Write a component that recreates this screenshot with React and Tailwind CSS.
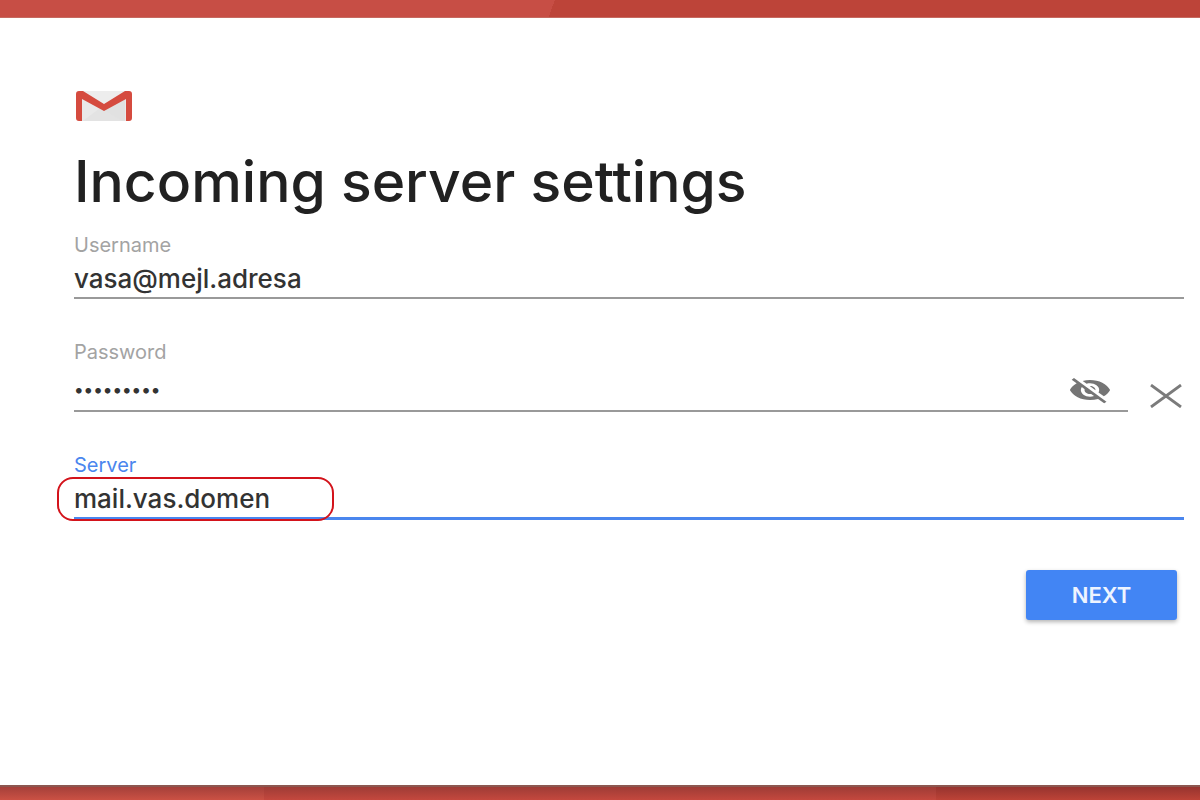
function GmailLogo() {
  return (
    <svg className="ml-0.5 h-8 w-14" viewBox="0 0 56 32" preserveAspectRatio="none" role="img" aria-label="Gmail">
      <rect x="1" y="1" width="54" height="30" rx="3" fill="#e9e9e9" />
      <path d="M4 3 L28 18 L52 3 V1 H4Z" fill="#ededed" />
      <path d="M7 31 L28 15 L49 31Z" fill="#e3e3e3" />
      <path d="M28 20 L46 31 H49 V7Z" fill="#e1e1e1" />
      <path d="M3 1 H7 L28 14 L49 1 H53 Q56 1 56 4 V28 Q56 31 53 31 H50 V9 L28 21 L6 9 V31 H3 Q0 31 0 28 V4 Q0 1 3 1Z" fill="#d54b3f" />
    </svg>
  );
}

function HiddenEyeIcon() {
  return (
    <svg className="h-8 w-11" viewBox="0 0 24 24" preserveAspectRatio="none" fill="#757575" aria-hidden="true">
      <path d="M12 7c2.76 0 5 2.24 5 5 0 .65-.13 1.26-.36 1.83l2.92 2.92c1.51-1.26 2.7-2.89 3.43-4.75-1.73-4.39-6-7.5-11-7.5-1.4 0-2.74.25-3.98.7l2.16 2.16C10.74 7.13 11.35 7 12 7zM2 4.27l2.28 2.28.46.46C3.08 8.3 1.78 10.02 1 12c1.73 4.39 6 7.5 11 7.5 1.55 0 3.03-.3 4.38-.84l.42.42L19.73 22 21 20.73 3.27 3 2 4.27zM7.53 9.8l1.55 1.55c-.05.21-.08.43-.08.65 0 1.66 1.34 3 3 3 .22 0 .44-.03.65-.08l1.55 1.55c-.67.33-1.41.53-2.2.53-2.76 0-5-2.24-5-5 0-.79.2-1.53.53-2.2zm4.31-.78l3.15 3.15.02-.16c0-1.66-1.34-3-3-3l-.17.01z" />
    </svg>
  );
}

function ClearIcon() {
  return (
    <svg className="h-6 w-8" viewBox="0 0 32 24" fill="none" stroke="#7b7b7b" strokeWidth="2.8" aria-hidden="true">
      <path d="M1 1 L31 23 M31 1 L1 23" />
    </svg>
  );
}

const inputClass = "w-full min-w-0 bg-transparent leading-8 font-medium text-[#333333] outline-none";

export default function App() {
  return (
    <div className="flex min-h-screen flex-col bg-white font-['Inter','Liberation_Sans',sans-serif]">
      <header className="h-[18px] border-b border-[#c66a60] bg-[linear-gradient(110deg,#c74e45_46%,#bd4439_46%)]" />
      <main className="flex-1 pt-[72px] pr-4 pb-10 pl-[74px]">
        <GmailLogo />
        <h1 className="mt-8 text-[57px] leading-14 font-medium text-[#212121]">Incoming server settings</h1>
        <form onSubmit={(event) => event.preventDefault()}>
          <div className="mt-[25px] border-b-2 border-[#999999]">
            <label htmlFor="username" className="block text-xl leading-5 text-[#a3a3a3]">Username</label>
            <input id="username" type="text" defaultValue="vasa@mejl.adresa" className={`${inputClass} mt-2 mb-0.5 text-[26px]`} />
          </div>
          <div className="mt-[43px] flex items-end gap-[22px]">
            <div className="min-w-0 flex-1 border-b-2 border-[#999999]">
              <label htmlFor="password" className="block text-xl leading-5 text-[#a3a3a3]">Password</label>
              <div className="mt-3 mb-1 flex items-center pr-4">
                <input id="password" type="password" defaultValue="password1" className={`${inputClass} text-[18px]`} />
                <button type="button" aria-label="Show password"><HiddenEyeIcon /></button>
              </div>
            </div>
            <button type="button" aria-label="Clear password" className="mr-0.5 mb-1"><ClearIcon /></button>
          </div>
          <div className="relative mt-[43px] border-b-3 border-[#4a86ee]">
            <label htmlFor="server" className="block text-xl leading-5 text-[#4a86ee]">Server</label>
            <input id="server" type="text" defaultValue="mail.vas.domen" className={`${inputClass} mt-2 mb-0.5 text-[26px]`} />
            <div className="pointer-events-none absolute -bottom-1 -left-[17px] h-11 w-[277px] rounded-2xl border-2 border-[#d3131b]" />
          </div>
          <div className="mt-[50px] flex justify-end pr-[7px]">
            <button type="submit" className="h-[50px] w-[151px] rounded-[3px] bg-[#4285f4] text-[22px] font-semibold text-[#eef4ff] shadow-[0_2px_4px_rgba(0,0,0,0.3)]">NEXT</button>
          </div>
        </form>
      </main>
      <footer className="flex h-[15px] border-t-2 border-[#8c5750] bg-linear-to-b from-[#9b3932] to-[#c4483d]">
        <div className="w-[22%] bg-linear-to-b from-[#a5403a] to-[#cb5144]" />
        <div className="w-[56%] bg-linear-to-b from-[#9f3c36] to-[#c4483e]" />
        <div className="flex-1 bg-linear-to-b from-[#97342f] to-[#bd4337]" />
      </footer>
    </div>
  );
}
